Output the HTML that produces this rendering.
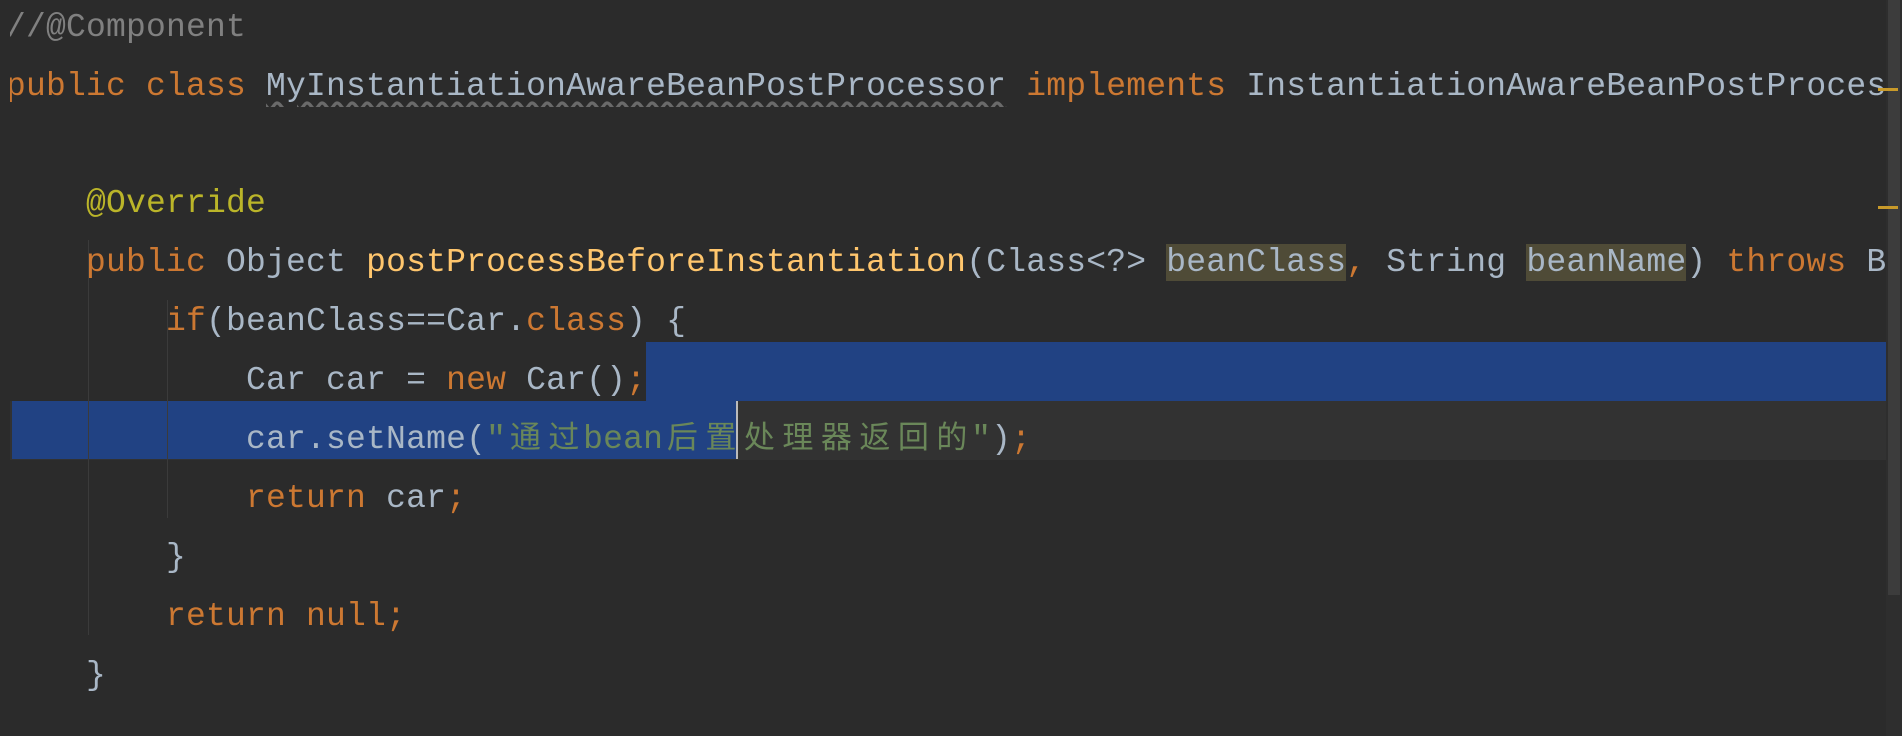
<!DOCTYPE html>
<html><head><meta charset="utf-8"><style>
html,body{margin:0;padding:0;width:1902px;height:736px;overflow:hidden;background:#2b2b2b;}
.row{position:absolute;left:0;width:1902px;height:59px;overflow:hidden;}
.t{position:absolute;left:6px;top:7px;height:59px;line-height:63px;white-space:pre;font-family:"Liberation Mono","Noto Sans CJK SC",monospace;font-size:33px;letter-spacing:0.2px;color:#a9b7c6;}
.k{color:#cc7832}.a{color:#bbb529}.c{color:#808080}.m{color:#ffc66d}.s{color:#6a8759}
.p{background:#4f4b37}
.cj{display:inline-block;width:38.5px;letter-spacing:0;text-align:center;font-size:31px}
.sq{text-decoration:underline wavy #6a6a6a;text-underline-offset:6px}
.g{position:absolute;width:1px;background:#3b3b3b}
</style></head><body>
<div class="row" style="top:401px;background:#323232"></div>
<div style="position:absolute;left:646px;top:342px;width:1256px;height:59px;background:#214283"></div>
<div style="position:absolute;left:12px;top:401px;width:725px;height:58px;background:#214283"></div>
<div style="position:absolute;left:736px;top:401px;width:2px;height:58px;background:#bbbbbb"></div>
<div class="g" style="left:88px;top:240px;height:395px"></div>
<div class="g" style="left:167px;top:300px;height:218px"></div>

<div class="row" style="top:-11px"><div class="t c">//@Component</div></div>
<div class="row" style="top:48px"><div class="t"><span class="k">public class </span><span class="sq">MyInstantiationAwareBeanPostProcessor</span> <span class="k">implements </span>InstantiationAwareBeanPostProcessor {</div></div>
<div class="row" style="top:165px"><div class="t a">    @Override</div></div>
<div class="row" style="top:224px"><div class="t"><span class="k">    public </span>Object <span class="m">postProcessBeforeInstantiation</span>(Class&lt;?&gt; <span class="p">beanClass</span><span class="k">, </span>String <span class="p">beanName</span>) <span class="k">throws </span>BeansException {</div></div>
<div class="row" style="top:283px"><div class="t"><span class="k">        if</span>(beanClass==Car.<span class="k">class</span>) {</div></div>
<div class="row" style="top:342px"><div class="t">            Car car = <span class="k">new </span>Car()<span class="k">;</span></div></div>
<div class="row" style="top:401px"><div class="t">            car.setName(<span class="s">"<span class="cj">通</span><span class="cj">过</span>bean<span class="cj">后</span><span class="cj">置</span><span class="cj">处</span><span class="cj">理</span><span class="cj">器</span><span class="cj">返</span><span class="cj">回</span><span class="cj">的</span>"</span>)<span class="k">;</span></div></div>
<div class="row" style="top:460px"><div class="t"><span class="k">            return </span>car<span class="k">;</span></div></div>
<div class="row" style="top:519px"><div class="t">        }</div></div>
<div class="row" style="top:578px"><div class="t"><span class="k">        return null;</span></div></div>
<div class="row" style="top:637px"><div class="t">    }</div></div>

<div style="position:absolute;left:0;top:0;width:10px;height:736px;background:#2b2b2b"></div>
<div style="position:absolute;left:1886px;top:0;width:16px;height:736px;background:#2e2e2e"></div>
<div style="position:absolute;left:1888px;top:0;width:12px;height:595px;background:#3c3c3c"></div>
<div style="position:absolute;left:1878px;top:88px;width:20px;height:3px;background:#c89a2a"></div>
<div style="position:absolute;left:1878px;top:206px;width:20px;height:3px;background:#c89a2a"></div>
</body></html>
